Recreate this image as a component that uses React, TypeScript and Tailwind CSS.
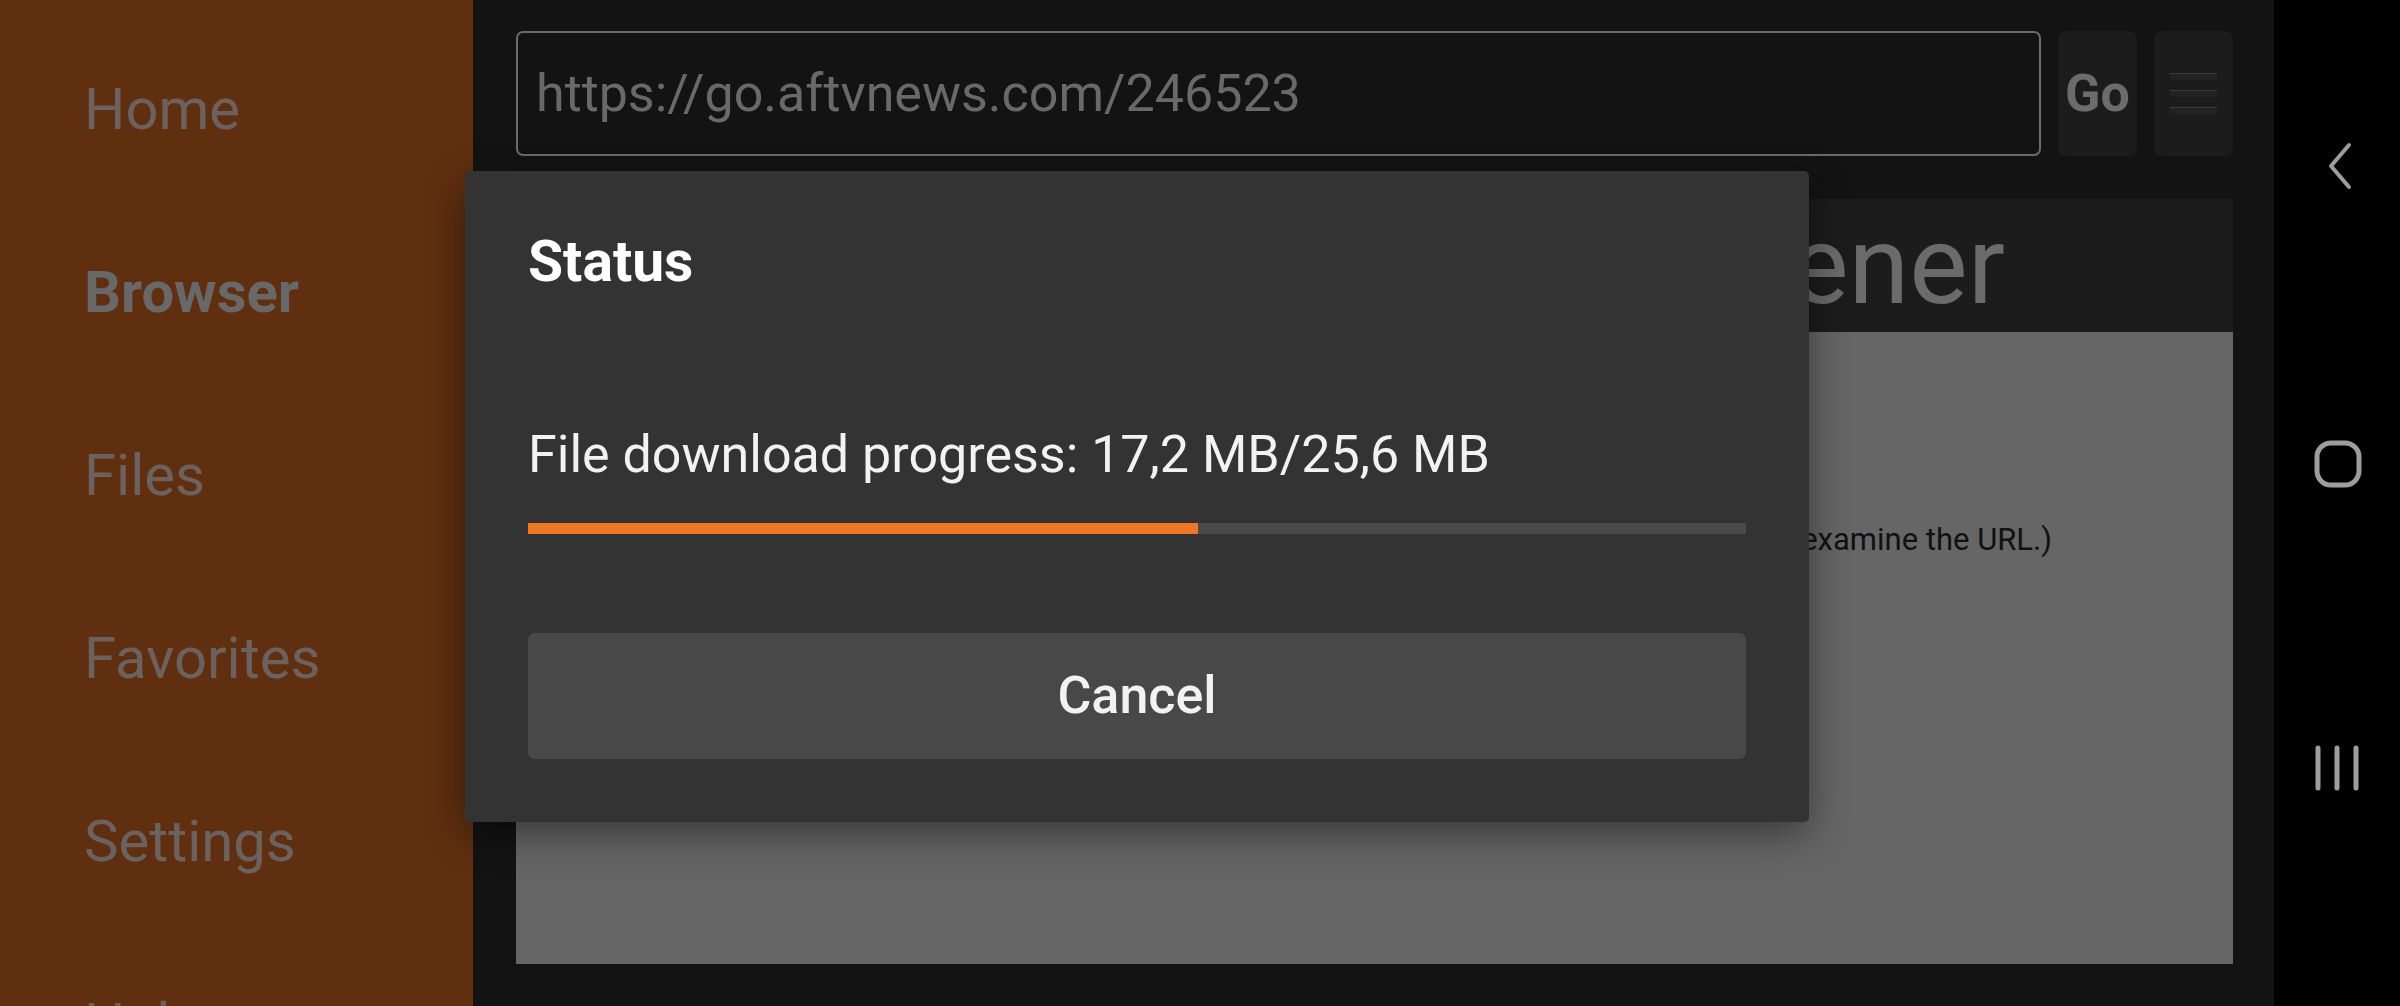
const navItems = [
  { label: "Home", active: false },
  { label: "Browser", active: true },
  { label: "Files", active: false },
  { label: "Favorites", active: false },
  { label: "Settings", active: false },
  { label: "Help", active: false },
];

const Sidebar = () => (
  <aside className="w-[473px] shrink-0 h-full overflow-hidden bg-[#602f10] pt-[18px] pl-[84px]">
    <ul>
      {navItems.map((item) => (
        <li
          key={item.label}
          className={
            item.active
              ? "h-[183px] leading-[183px] text-[58px] font-bold text-[#686868]"
              : "h-[183px] leading-[183px] text-[58px] text-[#6b625f]"
          }
        >
          {item.label}
        </li>
      ))}
    </ul>
  </aside>
);

const TopBar = () => (
  <div className="flex items-stretch h-[125px] gap-[17px]">
    <div className="w-[1525px] flex items-center rounded-[7px] border-2 border-[#6b6b6b] bg-[#131313] pl-[18px]">
      <span className="text-[52px] text-[#696969] leading-none">https://go.aftvnews.com/246523</span>
    </div>
    <button className="w-[79px] rounded-[8px] bg-[#1c1c1c] text-[52px] font-bold text-[#6c6c6c] flex items-center justify-center">
      Go
    </button>
    <button className="w-[79px] rounded-[8px] bg-[#1c1c1c] flex flex-col items-center justify-center gap-[10px]">
      <span className="block w-[47px] h-[7px] bg-[#222222] border-t border-[#3a3a3a]" />
      <span className="block w-[47px] h-[7px] bg-[#222222] border-t border-[#3a3a3a]" />
      <span className="block w-[47px] h-[7px] bg-[#222222] border-t border-[#3a3a3a]" />
    </button>
  </div>
);

const PagePanel = () => (
  <div className="mt-[43px] h-[765px] flex flex-col">
    <div className="h-[133px] bg-[#1c1c1c] text-center text-[110px] leading-[133px] text-[#6b6b6b] whitespace-nowrap overflow-hidden">
      AFTVnews URL Shortener
    </div>
    <div className="flex-1 bg-[#666666] pt-[185px] pr-[181px] text-right">
      <p className="text-[31px] text-[#111111] whitespace-nowrap">
        (Hover over or long-press the link on the page to examine the URL.)
      </p>
    </div>
  </div>
);

const NavBar = () => (
  <div className="w-[127px] shrink-0 h-full bg-black flex flex-col items-center">
    <svg className="mt-[142px] ml-[4px]" width="30" height="48" viewBox="0 0 30 48" fill="none">
      <path d="M24 3 L6 24 L24 45" stroke="#9d9d9d" strokeWidth="4" strokeLinecap="round" strokeLinejoin="round" />
    </svg>
    <svg className="mt-[250px]" width="48" height="48" viewBox="0 0 48 48" fill="none">
      <rect x="3" y="3" width="42" height="42" rx="14" stroke="#9d9d9d" strokeWidth="5" />
    </svg>
    <svg className="mt-[257px] -ml-[2px]" width="46" height="46" viewBox="0 0 46 46" fill="none">
      <path d="M4 3 V43 M23 3 V43 M42 3 V43" stroke="#9d9d9d" strokeWidth="5" strokeLinecap="round" />
    </svg>
  </div>
);

const StatusDialog = () => (
  <div className="absolute left-[465px] top-[171px] w-[1344px] rounded-[5px] bg-[#333333] px-[63px] pt-[58px] pb-[63px] shadow-[0_12px_40px_rgba(0,0,0,0.45)]">
    <h2 className="text-[57px] font-bold leading-[66px] text-white">Status</h2>
    <p className="mt-[129px] text-[52px] leading-[61px] text-[#f2f2f2]">File download progress: 17,2 MB/25,6 MB</p>
    <div className="mt-[38px] h-[11px] bg-[#4a4a4a]">
      <div className="h-full bg-[#ee7726]" style={{ width: "55%" }} />
    </div>
    <button className="mt-[99px] w-full h-[126px] rounded-[7px] bg-[#484848] text-[52px] font-medium text-[#f2f2f2]">
      Cancel
    </button>
  </div>
);

export default function App() {
  return (
    <div className="relative w-[2400px] h-[1006px] flex overflow-hidden font-['Roboto',sans-serif]">
      <Sidebar />
      <main className="flex-1 h-full bg-[#131313] pt-[31px] pl-[43px] pr-[41px]">
        <TopBar />
        <PagePanel />
      </main>
      <NavBar />
      <StatusDialog />
    </div>
  );
}
